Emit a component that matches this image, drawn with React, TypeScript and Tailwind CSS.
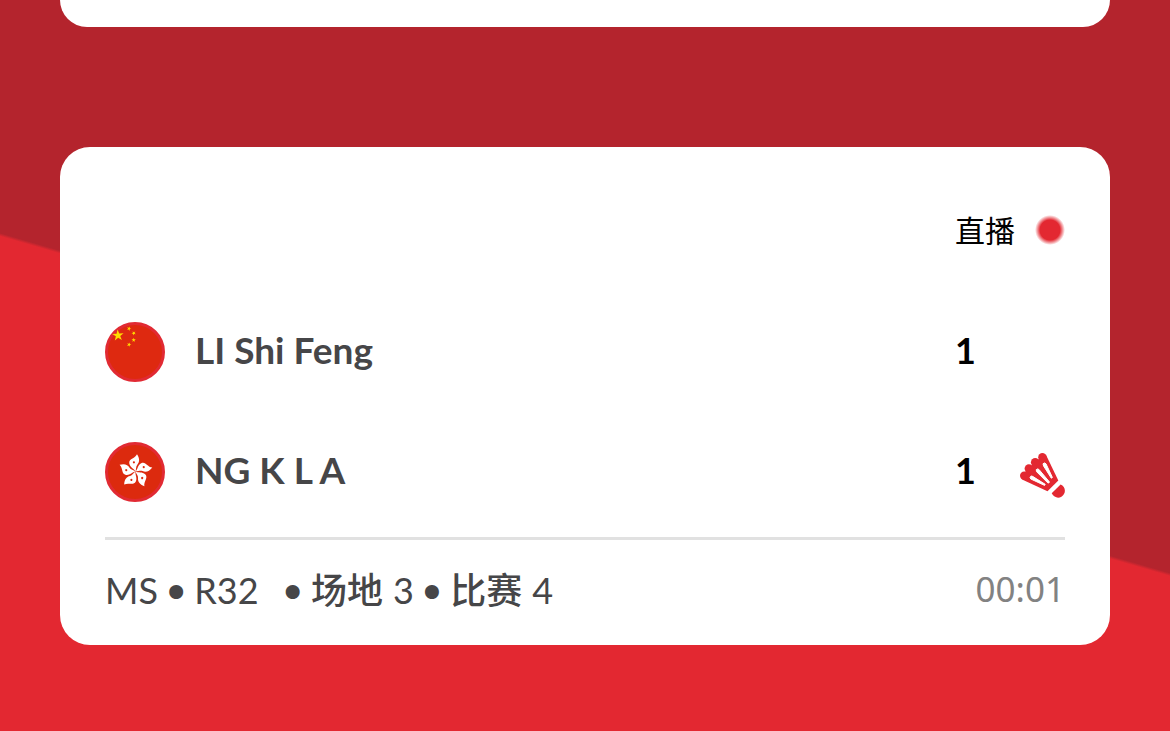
import React from 'react'

type Player = {
  name: string
  score: number
  flag: React.ReactNode
  serving?: boolean
}

const Star = ({ x, y, r, turn = 0 }: { x: number; y: number; r: number; turn?: number }) => (
  <path
    fill="#ffde00"
    transform={`translate(${x} ${y}) rotate(${turn}) scale(${r})`}
    d="M0-1 .225-.309H.951L.363.118.588.809 0 .382-.588.809-.363.118-.951-.309H-.225Z"
  />
)

const ChinaFlag = () => (
  <svg viewBox="0 0 60 60" className="size-15 shrink-0" role="img" aria-label="China">
    <circle cx="30" cy="30" r="28.5" fill="#de2910" stroke="#e12a33" strokeWidth="3" />
    <Star x={13} y={13.5} r={6} turn={-4} />
    <Star x={24} y={6.7} r={2.3} turn={20} />
    <Star x={28.7} y={11.2} r={2.3} turn={45} />
    <Star x={28.7} y={18} r={2.3} />
    <Star x={24} y={22.6} r={2.3} turn={20} />
  </svg>
)

const HongKongFlag = () => (
  <svg viewBox="0 0 60 60" className="size-15 shrink-0" role="img" aria-label="Hong Kong">
    <circle cx="30" cy="30" r="28.5" fill="#dc2a0e" stroke="#e12a33" strokeWidth="3" />
    {[0, 72, 144, 216, 288].map((turn) => (
      <g key={turn} transform={`translate(30.5 29.5) rotate(${turn})`}>
        <path
          fill="#fff"
          d="M0 0C-1.500-3-5.500-4-6.200-8C-6.800-13-.8-12.500 1.500-17.200C4.300-13 4.300-9.500 1.800-6.800C.2-5 .8-2.500 0 0Z"
        />
        <circle cx="-1.6" cy="-9.200" r="1.100" fill="#dc2a0e" />
      </g>
    ))}
  </svg>
)

const Shuttlecock = () => (
  <svg viewBox="0 0 45 45" className="mt-1.5 size-[45px]" role="img" aria-label="Serving">
    <g fill="#e32831">
      <circle cx="22.400" cy="4.200" r="4.200" />
      <circle cx="15.200" cy="9.200" r="4.300" />
      <circle cx="8.900" cy="15.500" r="4.300" />
      <circle cx="4.200" cy="22.700" r="4.200" />
      <path d="M26.300 2.500 38.300 27.500 27.500 38.200 2.600 26.700 5 19 12 12 20 5Z" />
      <path d="M40.600 31.400C44.500 33 46 37.500 44 41C41.500 45.500 35 46.500 31.700 40.300Z" />
    </g>
    <g stroke="#fff" fill="#fff" strokeLinejoin="round">
      <path d="M23 10.800Q24.500 9 26 10.800L32.400 24.500 31.300 25.200 23.600 13Z" />
      <path d="M16.200 16.700Q17.500 15.200 19 16.500L29.300 28.800 29 29.900 27.800 29.900 16.600 18.700Z" />
      <path d="M10.800 23.200Q9.200 24.800 10.800 26L24.600 32.400 25.200 31.300 13 23.600Q11.800 22.600 10.800 23.200Z" />
    </g>
  </svg>
)

const PlayerRow = ({ name, score, flag, serving }: Player) => (
  <li className="flex h-15 items-center gap-[30px]">
    {flag}
    <p className="flex-1 pb-1 text-[37px] leading-10 font-bold text-[#464648]">{name}</p>
    <div className="flex w-[110px] shrink-0 items-center justify-between">
      <span className="pb-1 text-4xl leading-10 font-bold text-black">{score}</span>
      {serving && <Shuttlecock />}
    </div>
  </li>
)

const Bullet = () => (
  <span className="mx-1 pt-1.5 font-['DejaVu_Sans',sans-serif] text-5xl leading-none">•</span>
)

const players: Player[] = [
  { name: 'LI Shi Feng', score: 1, flag: <ChinaFlag /> },
  { name: 'NG K L A', score: 1, flag: <HongKongFlag />, serving: true },
]

const MatchCard = () => (
  <article className="rounded-[30px] bg-white px-[45px] pt-[53px]">
    <header className="flex h-15 items-center justify-end">
      <div className="flex w-[110px] items-center justify-between">
        <span className="text-3xl text-black">直播</span>
        <span className="size-[30px] rounded-full bg-[radial-gradient(circle,#e32831_10px,#e3283100_15px)]" />
      </div>
    </header>

    <ul className="mt-[62px] flex flex-col gap-15 border-b-3 border-[#e1e1e1] pb-[35px]">
      {players.map((player) => (
        <PlayerRow key={player.name} {...player} />
      ))}
    </ul>

    <footer className="flex h-[105px] items-center justify-between pb-1.5">
      <p className="flex items-center text-4xl text-[#464648]">
        MS
        <Bullet />
        <span className="mr-4">R32</span>
        <Bullet />
        <span className="font-medium">场地</span>
        <span className="ml-2.5">3</span>
        <Bullet />
        <span className="font-medium">比赛</span>
        <span className="ml-2.5">4</span>
      </p>
      <time className="font-['Noto_Sans',sans-serif] text-[35px] text-[#828282]">00:01</time>
    </footer>
  </article>
)

const App = () => {
  return (
    <main
      lang="zh-CN"
      className="min-h-screen bg-[linear-gradient(196.2deg,#b4242d_53.500%,#e32831_53.800%)] px-15 pb-[86px] font-['Lato','Noto_Sans_CJK_SC',sans-serif]"
    >
      <div className="mb-30 h-[27px] rounded-b-[30px] bg-white" />
      <MatchCard />
    </main>
  )
}

export default App
